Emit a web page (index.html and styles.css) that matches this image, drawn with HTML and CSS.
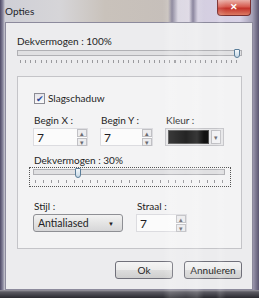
FILE: index.html
```html
<!DOCTYPE html>
<html lang="nl">
<head>
    <meta charset="UTF-8">
    <title>Opties</title>
    <link rel="stylesheet" href="styles.css">
</head>
<body>
    <div class="window">
        <div class="titlebar">
            <span class="title">Opties</span>
            <button class="close">&#x2715;</button>
        </div>
        <div class="client">
            <div class="label top-label">Dekvermogen : 100%</div>
            <div class="slider wide">
                <div class="track"><span class="thumb" style="left: 216px"></span></div>
                <div class="ticks"></div>
            </div>

            <div class="group">
                <label class="check"><span class="box">&#x2714;</span>Slagschaduw</label>

                <div class="row fields">
                    <div class="field">
                        <div class="label">Begin X :</div>
                        <div class="spin"><span class="val">7</span><span class="arrows"><i>&#x25B4;</i><i>&#x25BE;</i></span></div>
                    </div>
                    <div class="field">
                        <div class="label">Begin Y :</div>
                        <div class="spin"><span class="val">7</span><span class="arrows"><i>&#x25B4;</i><i>&#x25BE;</i></span></div>
                    </div>
                    <div class="field">
                        <div class="label">Kleur :</div>
                        <div class="color"><span class="swatch"></span><span class="drop">&#x25BE;</span></div>
                    </div>
                </div>

                <div class="label mid-label">Dekvermogen : 30%</div>
                <div class="slider framed">
                    <div class="track"><span class="thumb" style="left: 41px"></span></div>
                    <div class="ticks"></div>
                </div>

                <div class="row bottom">
                    <div class="field">
                        <div class="label">Stijl :</div>
                        <div class="select">Antialiased<span class="caret">&#x25BC;</span></div>
                    </div>
                    <div class="field">
                        <div class="label">Straal :</div>
                        <div class="spin small"><span class="val">7</span><span class="arrows"><i>&#x25B4;</i><i>&#x25BE;</i></span></div>
                    </div>
                </div>
            </div>

            <div class="buttons">
                <button class="btn">Ok</button>
                <button class="btn">Annuleren</button>
            </div>
        </div>
        <div class="glare"></div>
    </div>
</body>
</html>
```

FILE: styles.css
```css
body {
    margin: 0;
    width: 259px;
    height: 298px;
    overflow: hidden;
    font-family: Lato, "Open Sans", sans-serif;
    font-size: 10px;
    color: #1e1e24;
    background: #3c3a44;
}
.window {
    position: relative;
    width: 259px;
    height: 298px;
    display: flex;
    flex-direction: column;
    background: linear-gradient(90deg, #4e4a66 0, #8c8aa0 3px, #cfcfd6 5px, #d6d5d8 60px, #c9c2bb 105px, #c6bfba 168px, #7d7890 172px, #d8d4e0 178px, #ddd8e4 189px, #7a7490 193px, #d4cee0 198px, #d8d2e6 240px, #a6a2b8 252px, #5a5670 259px);
}
.titlebar {
    height: 22px;
    display: flex;
    justify-content: space-between;
    align-items: flex-start;
    padding: 0 8px 0 5px;
}
.title {
    margin-top: 5px;
    line-height: 12px;
    color: #22222a;
}
.close {
    width: 34px;
    height: 16px;
    margin: 0;
    padding: 0;
    border: 1px solid #7a3030;
    border-top: none;
    border-radius: 0 0 4px 4px;
    background: linear-gradient(#eab0a8, #d65a4e 45%, #c3332a 55%, #dc7a62);
    color: #fff;
    font-size: 9px;
    font-weight: bold;
    line-height: 15px;
}
.client {
    height: 266px;
    margin: 0 6px 0 5px;
    border: 1px solid #8c8a9c;
    background: #ececee;
    display: flex;
    flex-direction: column;
    padding: 0 10px 0 11px;
}
.window::after {
    content: "";
    height: 8px;
    background: linear-gradient(#9c9aa2 0, #5b5a62 2px, #2a2a30);
}
.label {
    line-height: 14px;
    white-space: nowrap;
}
.top-label {
    margin-top: 11px;
}
.slider {
    position: relative;
}
.slider.wide {
    margin-top: 2px;
    width: 225px;
    height: 14px;
}
.track {
    position: relative;
    height: 4px;
    border: 1px solid #b0b0b4;
    background: #e0e0e2;
}
.thumb {
    position: absolute;
    top: -2px;
    width: 4px;
    height: 7px;
    border: 1px solid #5a7d99;
    border-radius: 1px 1px 3px 3px;
    background: linear-gradient(#f4f8fb, #c6d8e6);
}
.ticks {
    height: 3px;
    margin: 4px 3px 0;
    background: repeating-linear-gradient(90deg, #9a9a9e 0, #9a9a9e 1px, transparent 1px, transparent 5.15px);
}
.group {
    margin-top: 12px;
    width: 225px;
    height: 173px;
    border: 1px solid #c4c4c8;
    background: #f3f3f4;
    box-sizing: border-box;
    padding: 15px 0 0 15px;
    display: flex;
    flex-direction: column;
}
.check {
    display: flex;
    align-items: center;
    gap: 3px;
    line-height: 12px;
    margin-left: 1px;
}
.box {
    width: 9px;
    height: 9px;
    border: 1px solid #8c8c94;
    background: linear-gradient(#e4e4ea, #fafafa);
    color: #2a4a9a;
    font-size: 9px;
    line-height: 9px;
    text-align: center;
}
.row {
    display: flex;
}
.fields {
    margin-top: 9px;
    gap: 12px;
}
.field .label {
    margin-bottom: 1px;
    padding-left: 1px;
}
.spin {
    width: 55px;
    height: 18px;
    box-sizing: border-box;
    border: 1px solid #dcdce0;
    background: #fbfbfb;
    display: flex;
    justify-content: space-between;
    align-items: center;
    padding: 0 0 0 3px;
    font-size: 12px;
}
.fields .field:nth-child(2) .spin {
    width: 53px;
}
.arrows {
    display: flex;
    flex-direction: column;
    gap: 1px;
}
.arrows i {
    font-style: normal;
    width: 8px;
    height: 6px;
    border: 1px solid #c0c0c4;
    background: #ececee;
    color: #6a6a70;
    font-size: 7px;
    line-height: 6px;
    text-align: center;
}
.color {
    width: 59px;
    height: 18px;
    box-sizing: border-box;
    border: 1px solid #c4c4c8;
    background: #e6e6e8;
    display: flex;
    align-items: center;
    padding: 0 2px;
    gap: 2px;
}
.swatch {
    width: 41px;
    height: 12px;
    background: #121212;
    border: 1px solid #505050;
}
.drop {
    width: 8px;
    height: 12px;
    border: 1px solid #c0c0c4;
    background: #f2f2f4;
    color: #707076;
    font-size: 7px;
    line-height: 12px;
    text-align: center;
}
.mid-label {
    margin-top: 7px;
    padding-left: 1px;
}
.slider.framed {
    margin: 0 0 0 -4px;
    width: 202px;
    height: 20px;
    box-sizing: border-box;
    border: 1px dotted #555;
    padding: 1px 5px 0 3px;
}
.slider.framed .thumb {
    width: 4px;
    height: 8px;
}
.slider.framed .ticks {
    margin: 5px 2px 0;
    background: repeating-linear-gradient(90deg, #9a9a9e 0, #9a9a9e 1px, transparent 1px, transparent 7.8px);
}
.bottom {
    margin-top: 12px;
    gap: 13px;
}
.select {
    width: 90px;
    height: 18px;
    box-sizing: border-box;
    border: 1px solid #8e8f94;
    border-radius: 3px;
    background: linear-gradient(#f2f2f2, #e4e4e4 50%, #d6d6d8);
    padding: 0 8px 0 4px;
    display: flex;
    justify-content: space-between;
    align-items: center;
    font-size: 10.5px;
}
.caret {
    font-size: 6px;
}
.spin.small {
    width: 51px;
}
.buttons {
    display: flex;
    justify-content: flex-end;
    gap: 11px;
    margin-top: 12px;
}
.btn {
    width: 58px;
    height: 18px;
    padding: 0;
    border: 1px solid #70707a;
    border-radius: 3px;
    background: linear-gradient(#f4f4f4, #ebebeb 50%, #dddddd 51%, #cfcfcf);
    font-family: inherit;
    font-size: 10px;
    color: #1e1e24;
}
.glare {
    position: absolute;
    inset: 0;
    pointer-events: none;
    background: linear-gradient(90deg, transparent 163px, rgba(255, 255, 255, 0.16) 170px, rgba(255, 255, 255, 0.08) 186px, rgba(255, 255, 255, 0.16) 197px, transparent 204px, transparent 216px, rgba(255, 255, 255, 0.12) 220px, transparent 226px);
}
```
